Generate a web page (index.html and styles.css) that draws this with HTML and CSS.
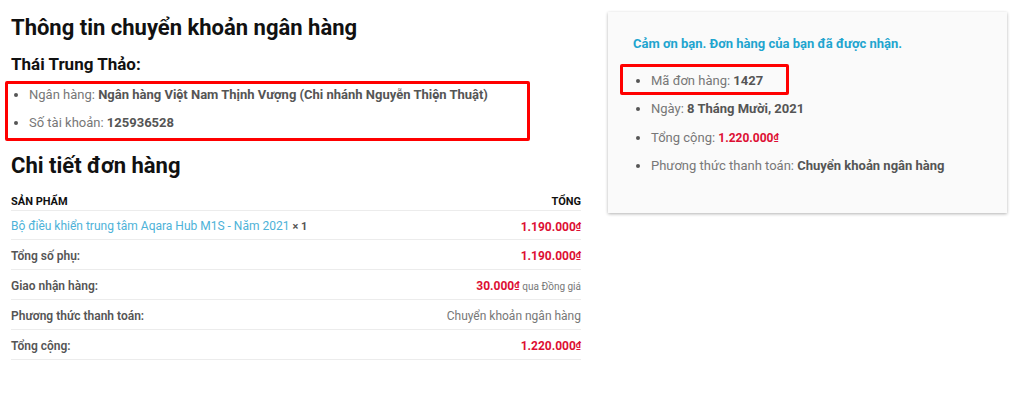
FILE: index.html
```
<!DOCTYPE html>
<html lang="vi">

<head>
  <meta charset="UTF-8">
  <meta name="viewport" content="width=device-width, initial-scale=1.0">
  <title>Đơn hàng đã nhận</title>

  <link rel="stylesheet" href="styles.css">
</head>

<body>
  <main class="order">
    <div class="order-main">
      <section class="bank-details">
        <h2>Thông tin chuyển khoản ngân hàng</h2>
        <h3>Thái Trung Thảo:</h3>
        <div class="highlight">
          <ul>
            <li>Ngân hàng: <strong>Ngân hàng Việt Nam Thịnh Vượng (Chi nhánh Nguyễn Thiện Thuật)</strong></li>
            <li>Số tài khoản: <strong>125936528</strong></li>
          </ul>
        </div>
      </section>

      <section class="order-details">
        <h2>Chi tiết đơn hàng</h2>
        <table>
          <thead>
            <tr>
              <th scope="col">Sản phẩm</th>
              <th scope="col">Tổng</th>
            </tr>
          </thead>
          <tbody>
            <tr>
              <td><a href="#">Bộ điều khiển trung tâm Aqara Hub M1S - Năm 2021</a> <strong class="quantity">× 1</strong></td>
              <td><span class="amount">1.190.000<span class="currency">₫</span></span></td>
            </tr>
          </tbody>
          <tfoot>
            <tr>
              <th scope="row">Tổng số phụ:</th>
              <td><span class="amount">1.190.000<span class="currency">₫</span></span></td>
            </tr>
            <tr>
              <th scope="row">Giao nhận hàng:</th>
              <td><span class="amount">30.000<span class="currency">₫</span></span> <small>qua Đồng giá</small></td>
            </tr>
            <tr>
              <th scope="row">Phương thức thanh toán:</th>
              <td>Chuyển khoản ngân hàng</td>
            </tr>
            <tr>
              <th scope="row">Tổng cộng:</th>
              <td><span class="amount">1.220.000<span class="currency">₫</span></span></td>
            </tr>
          </tfoot>
        </table>
      </section>
    </div>

    <aside class="order-summary">
      <p class="success">Cảm ơn bạn. Đơn hàng của bạn đã được nhận.</p>
      <ul>
        <li class="order-number">Mã đơn hàng: <strong>1427</strong></li>
        <li>Ngày: <strong>8 Tháng Mười, 2021</strong></li>
        <li>Tổng cộng: <span class="amount">1.220.000<span class="currency">₫</span></span></li>
        <li>Phương thức thanh toán: <strong>Chuyển khoản ngân hàng</strong></li>
      </ul>
    </aside>
  </main>
</body>

</html>
```
FILE: styles.css
```
*, *::before {
  box-sizing: border-box;
}

body {
  background-color: #fff;
  color: #777;
  font: 13px/20px Roboto, "Liberation Sans", sans-serif;
  margin: 0;
}

h2, h3 {
  color: #111;
  font-weight: 700;
  margin: 0;
}

h2 {
  font-size: 22px;
  line-height: 32px;
}

h3 {
  font-size: 17px;
  line-height: 24px;
  margin-top: 8px;
}

ul {
  margin: 0;
  padding-left: 18px;
}

li::marker {
  color: #555;
}

li + li {
  margin-top: 8px;
}

strong {
  color: #555;
  font-weight: 700;
}

a {
  color: #4db2d8;
  text-decoration: none;
}

a:hover {
  color: #111;
}

.order {
  align-items: start;
  display: grid;
  gap: 27px;
  grid-template-columns: 10fr 7fr;
  padding: 12px 17px 32px 11px;
}

.highlight {
  border: 3px solid #f00;
  border-radius: 2px;
  margin: 5px 51px 0 -6px;
  padding: 1px 3px 5px;
}

.highlight ul {
  white-space: nowrap;
}

.order-details {
  margin-top: 9px;
}

table {
  border-collapse: collapse;
  font-size: 12px;
  margin-top: 8px;
  width: 100%;
}

th, td {
  border-bottom: 1px solid #ececec;
  height: 30px;
  line-height: 20px;
  padding: 2px 0 0;
  text-align: left;
}

th:last-child, td:last-child {
  text-align: right;
}

thead th {
  color: #111;
  font-size: 11px;
  font-weight: 700;
  height: 20px;
  line-height: 16px;
  padding-top: 4px;
  text-transform: uppercase;
}

tbody td {
  height: 29px;
}

tfoot th {
  color: #555;
  font-weight: 600;
}

small {
  font-size: 10px;
}

.quantity {
  font-size: 11px;
}

.amount {
  color: #dd0f33;
  font-size: 12px;
  font-weight: 700;
  white-space: nowrap;
}

.currency {
  font-size: 9px;
  vertical-align: 2px;
}

.order-summary {
  background-color: #fafafa;
  box-shadow: 0 1px 3px rgba(0, 0, 0, 0.3);
  padding: 22px 25px 37px;
}

.success {
  color: #1fa5cf;
  font-weight: 700;
  margin: 0 0 17px;
}

.order-number {
  position: relative;
}

/* frame drawn over the first line, bullet included */
.order-number::before {
  border: 3px solid #f00;
  border-radius: 2px;
  content: "";
  height: 31px;
  left: -31px;
  position: absolute;
  top: -7px;
  width: 169px;
}
```
